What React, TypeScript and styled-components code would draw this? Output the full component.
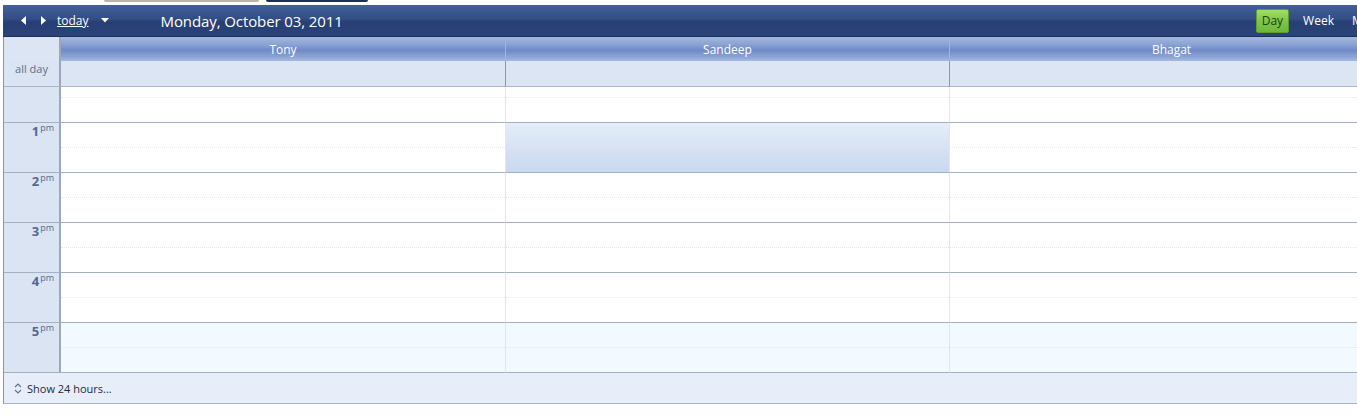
import React from "react";
import styled, { createGlobalStyle } from "styled-components";

const GlobalStyle = createGlobalStyle`
  html, body {
    margin: 0;
    padding: 0;
    background: #ffffff;
    overflow: hidden;
    font-family: "Open Sans", "Noto Sans", "DejaVu Sans", sans-serif;
  }
`;

const Page = styled.div`
  width: 1357px;
  height: 416px;
  overflow: hidden;
  position: relative;
`;

const TabStrip = styled.div`
  height: 5px;
  display: flex;
  gap: 7px;
  padding-left: 104px;
`;

const StubTab = styled.div<{ $dark?: boolean }>`
  width: ${(p) => (p.$dark ? 102 : 155)}px;
  height: 2px;
  background: ${(p) => (p.$dark ? "#1b2f5a" : "#b9b4ad")};
  border-radius: 0 0 2px 2px;
`;

const Scheduler = styled.div`
  margin-left: 3px;
  width: 1392px;
  display: flex;
  flex-direction: column;
`;

const Toolbar = styled.div`
  height: 31px;
  display: flex;
  align-items: center;
  background: linear-gradient(#42609a 0%, #334d85 45%, #273f73 55%, #2a437a 100%);
  border-bottom: 1px solid #1c2d56;
  color: #fff;
  padding-left: 11px;
`;

const NavButton = styled.span`
  width: 19px;
  display: flex;
  align-items: center;
  justify-content: center;
  height: 20px;
`;

const TodayLink = styled.a`
  margin-left: 5px;
  color: #fff;
  font-size: 12px;
  text-decoration: underline;
  font-family: "Open Sans", "Noto Sans", sans-serif;
  cursor: pointer;
`;

const Caret = styled.span`
  margin-left: 12px;
  display: flex;
  align-items: center;
`;

const Title = styled.div`
  margin-left: 52px;
  font-size: 15px;
  color: #fff;
  letter-spacing: -0.1px;
`;

const ViewSwitch = styled.div`
  margin-left: auto;
  display: flex;
  align-items: center;
  gap: 6px;
  margin-right: 0px;
`;

const ViewButton = styled.span<{ $active?: boolean }>`
  font-size: 12px;
  padding: 2px 5px 3px;
  border-radius: 2px;
  color: ${(p) => (p.$active ? "#25410f" : "#fff")};
  background: ${(p) =>
    p.$active ? "linear-gradient(#a4dc6c, #7fc64a 50%, #6db83a 100%)" : "transparent"};
  border: 1px solid ${(p) => (p.$active ? "#5d9d33" : "transparent")};
  margin-right: ${(p) => (p.$active ? 2 : 0)}px;
`;

const Grid = styled.div`
  display: grid;
  grid-template-columns: 57px repeat(3, 444px);
  border-left: 1px solid #8797b0;
`;

const GutterHead = styled.div`
  height: 24px;
  background: #dce5f3;
  border-right: 2px solid #9aa7bd;
`;

const ResourceHead = styled.div<{ $first?: boolean }>`
  height: 24px;
  display: flex;
  align-items: center;
  justify-content: center;
  font-size: 12px;
  color: #fff;
  background: linear-gradient(#a4b8df 0%, #8ba3d4 30%, #7089c6 55%, #8ea6d6 85%, #a6badf 100%);
  border-left: ${(p) => (p.$first ? "none" : "1px solid #9fb6e4")};
`;

const AllDayLabel = styled.div`
  height: 26px;
  background: #dae4f3;
  border-right: 2px solid #9aa7bd;
  border-bottom: 1px solid #a9b6c9;
  font-size: 11px;
  color: #5b6f8e;
  text-align: center;
  line-height: 14px;
  padding-top: 1px;
  box-sizing: border-box;
`;

const AllDayCell = styled.div<{ $first?: boolean }>`
  height: 26px;
  box-sizing: border-box;
  background: #dbe5f4;
  border-bottom: 1px solid #a9b6c9;
  border-left: ${(p) => (p.$first ? "none" : "1px solid #8a98ad")};
`;

const GutterSlot = styled.div<{ $h: number }>`
  height: ${(p) => p.$h}px;
  box-sizing: border-box;
  background: #dbe4f2;
  border-right: 2px solid #9aa7bd;
  border-bottom: 1px solid #a3b0c4;
  display: flex;
  justify-content: flex-end;
  padding-right: 5px;
  padding-top: 1px;
  color: #4f6a92;
`;

const HourNum = styled.span`
  font-size: 13px;
  font-weight: bold;
  line-height: 14px;
`;

const Meridiem = styled.span`
  font-size: 9px;
  line-height: 10px;
  margin-left: 1px;
  margin-top: -1px;
`;

const Slot = styled.div<{ $h: number; $first?: boolean; $off?: boolean; $selected?: boolean }>`
  height: ${(p) => p.$h}px;
  box-sizing: border-box;
  border-bottom: 1px solid #a3b0c4;
  border-left: ${(p) => (p.$first ? "none" : "1px solid #e2e6ec")};
  background: ${(p) =>
    p.$selected
      ? "linear-gradient(#e6edf8, #d3e0f3 60%, #c9d9f0)"
      : p.$off
      ? "#f2f9ff"
      : "#ffffff"};
  display: flex;
  flex-direction: column;
  justify-content: flex-end;
`;

const HalfLine = styled.div<{ $bottom: number }>`
  border-top: 1px dotted #e4e7ec;
  margin-bottom: ${(p) => p.$bottom}px;
`;

const Footer = styled.div`
  height: 31px;
  box-sizing: border-box;
  background: #e7eefa;
  border-left: 1px solid #8797b0;
  border-bottom: 1px solid #a7b3c4;
  display: flex;
  align-items: center;
  padding-left: 10px;
  gap: 5px;
  font-size: 11px;
  color: #1e2a3c;
`;

const Arrow = ({ dir }: { dir: "l" | "r" }) => (
  <svg width="6" height="9" viewBox="0 0 6 9">
    {dir === "l" ? (
      <polygon points="5,0 5,9 0,4.5" fill="#fff" />
    ) : (
      <polygon points="1,0 1,9 6,4.5" fill="#fff" />
    )}
  </svg>
);

const hours = [
  { label: "1", off: false },
  { label: "2", off: false },
  { label: "3", off: false },
  { label: "4", off: false },
  { label: "5", off: true },
];

const people = ["Tony", "Sandeep", "Bhagat"];

export default function App() {
  return (
    <>
      <GlobalStyle />
      <Page>
        <TabStrip>
          <StubTab />
          <StubTab $dark />
        </TabStrip>
        <Scheduler>
          <Toolbar>
            <NavButton>
              <Arrow dir="l" />
            </NavButton>
            <NavButton>
              <Arrow dir="r" />
            </NavButton>
            <TodayLink>today</TodayLink>
            <Caret>
              <svg width="8" height="5" viewBox="0 0 8 5">
                <polygon points="0,0 8,0 4,4.5" fill="#fff" />
              </svg>
            </Caret>
            <Title>Monday, October 03, 2011</Title>
            <ViewSwitch>
              <ViewButton $active>Day</ViewButton>
              <ViewButton>Week</ViewButton>
              <ViewButton>Month</ViewButton>
            </ViewSwitch>
          </Toolbar>
          <Grid>
            <GutterHead />
            {people.map((p, i) => (
              <ResourceHead key={p} $first={i === 0}>
                {p}
              </ResourceHead>
            ))}
            <AllDayLabel>all day</AllDayLabel>
            {people.map((p, i) => (
              <AllDayCell key={p} $first={i === 0} />
            ))}
            <GutterSlot $h={36} />
            {people.map((p, i) => (
              <Slot key={p} $h={36} $first={i === 0}>
                <HalfLine $bottom={24} />
              </Slot>
            ))}
            {hours.map((h) => (
              <React.Fragment key={h.label}>
                <GutterSlot $h={50}>
                  <HourNum>{h.label}</HourNum>
                  <Meridiem>pm</Meridiem>
                </GutterSlot>
                {people.map((p, i) => (
                  <Slot
                    key={p}
                    $h={50}
                    $first={i === 0}
                    $off={h.off}
                    $selected={h.label === "1" && i === 1}
                  >
                    <HalfLine $bottom={24} />
                  </Slot>
                ))}
              </React.Fragment>
            ))}
          </Grid>
          <Footer>
            <svg width="8" height="13" viewBox="0 0 8 13">
              <polyline points="1,5 4,2 7,5" fill="none" stroke="#5b7397" strokeWidth="1.2" />
              <polyline points="1,8 4,11 7,8" fill="none" stroke="#5b7397" strokeWidth="1.2" />
            </svg>
            <span>Show 24 hours...</span>
          </Footer>
        </Scheduler>
      </Page>
    </>
  );
}
